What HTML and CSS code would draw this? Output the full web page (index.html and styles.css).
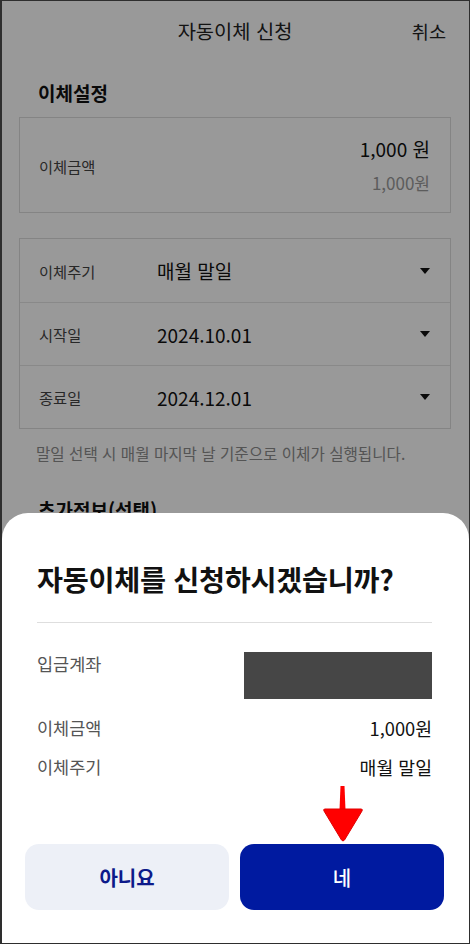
FILE: index.html
```html
<!DOCTYPE html>
<html lang="ko">
<head>
<meta charset="utf-8">
<title>자동이체 신청</title>
<link rel="stylesheet" href="styles.css">
</head>
<body>
<div class="screen">
  <div class="page">
    <header class="topbar">
      <h1 class="topbar-title">자동이체 신청</h1>
      <span class="topbar-cancel">취소</span>
    </header>

    <h2 class="section-title">이체설정</h2>
    <div class="card amount-card">
      <span class="field-label">이체금액</span>
      <div class="amount-values">
        <span class="amount-main">1,000 원</span>
        <span class="amount-sub">1,000원</span>
      </div>
    </div>

    <div class="card select-card">
      <div class="select-row">
        <span class="field-label">이체주기</span>
        <span class="select-value">매월 말일</span>
        <span class="caret"></span>
      </div>
      <div class="select-row">
        <span class="field-label">시작일</span>
        <span class="select-value">2024.10.01</span>
        <span class="caret"></span>
      </div>
      <div class="select-row">
        <span class="field-label">종료일</span>
        <span class="select-value">2024.12.01</span>
        <span class="caret"></span>
      </div>
    </div>
    <p class="note">말일 선택 시 매월 마지막 날 기준으로 이체가 실행됩니다.</p>

    <h2 class="section-title extra-title">추가정보(선택)</h2>
  </div>

  <div class="dim"></div>

  <div class="sheet">
    <h3 class="sheet-title">자동이체를 신청하시겠습니까?</h3>
    <div class="sheet-divider"></div>
    <div class="info-row account-row">
      <span class="info-label">입금계좌</span>
      <span class="masked"></span>
    </div>
    <div class="info-row">
      <span class="info-label">이체금액</span>
      <span class="info-value">1,000원</span>
    </div>
    <div class="info-row">
      <span class="info-label">이체주기</span>
      <span class="info-value">매월 말일</span>
    </div>
    <div class="sheet-actions">
      <button class="btn btn-no">아니요</button>
      <button class="btn btn-yes">네</button>
    </div>
  </div>

  <svg class="pointer" width="46" height="62" viewBox="0 0 46 62" aria-hidden="true">
    <path d="M20.5 2 L24.5 2 L25.5 26 L19.5 26 Z" fill="#ff0000"/>
    <path d="M5 25 L41 25 Q43 25 42 27 L24.5 56 Q23 58 21.5 56 L4 27 Q3 25 5 25 Z" fill="#ff0000" stroke="#e00000" stroke-width="1"/>
  </svg>
</div>
</body>
</html>
```

FILE: styles.css
```css
* { box-sizing: border-box; }

html, body {
  margin: 0;
  padding: 0;
  background: #fff;
}

body {
  font-family: "Noto Sans CJK KR", "Noto Sans", sans-serif;
  color: #222;
}

.screen {
  position: relative;
  width: 470px;
  height: 944px;
  overflow: hidden;
  background: #fff;
  border: 1px solid #2e2e2e;
  border-left-width: 2px;
}

.page {
  display: flex;
  flex-direction: column;
  padding: 0 18px 0 17px;
}

.topbar {
  height: 58px;
  display: flex;
  align-items: center;
  justify-content: center;
  position: relative;
}

.topbar-title {
  margin: 0;
  font-size: 19.8px;
  font-weight: 400;
  color: #222;
}

.topbar-cancel {
  position: absolute;
  right: 5px;
  top: 50%;
  transform: translateY(-50%);
  font-size: 18.6px;
  color: #222;
}

.section-title {
  margin: 21px 0 11px 19px;
  font-size: 19px;
  line-height: 26px;
  font-weight: 700;
  color: #111;
}

.card {
  border: 1px solid #dcdcdc;
  background: #fff;
}

.amount-card {
  height: 96px;
  display: flex;
  align-items: center;
  justify-content: space-between;
  padding: 0 20px 0 19px;
}

.field-label {
  font-size: 15.3px;
  color: #444;
}

.amount-card .field-label {
  margin-top: 2px;
}

.amount-values {
  display: flex;
  flex-direction: column;
  align-items: flex-end;
}

.amount-main {
  font-size: 19px;
  line-height: 24px;
  color: #111;
}

.amount-sub {
  margin-top: 12px;
  font-size: 17px;
  line-height: 20px;
  color: #9a9a9a;
}

.select-card {
  margin-top: 25px;
}

.select-row {
  height: 63px;
  display: flex;
  align-items: center;
  padding: 0 20px 0 19px;
  border-top: 1px solid #e4e4e4;
}

.select-row:first-child {
  border-top: none;
}

.select-row .field-label {
  width: 118px;
  flex: none;
}

.select-value {
  flex: 1;
  font-size: 19px;
  color: #111;
}

.caret {
  width: 0;
  height: 0;
  border-left: 5px solid transparent;
  border-right: 5px solid transparent;
  border-top: 6px solid #111;
}

.note {
  margin: 14px 0 0 17px;
  font-size: 15.6px;
  line-height: 20px;
  color: #8c8c8c;
  white-space: nowrap;
}

.extra-title {
  margin-top: 34px;
}

.dim {
  position: absolute;
  inset: 0;
  background: rgba(0, 0, 0, 0.4);
}

.sheet {
  position: absolute;
  left: 0;
  right: 0;
  bottom: 0;
  height: 430px;
  background: #fff;
  border-radius: 26px 26px 0 0;
  padding: 47px 37px 0 35px;
  display: flex;
  flex-direction: column;
}

.sheet-title {
  margin: 0;
  font-size: 28.3px;
  line-height: 38px;
  font-weight: 700;
  color: #111;
  letter-spacing: -0.3px;
  white-space: nowrap;
}

.sheet-divider {
  margin-top: 24px;
  height: 1px;
  background: #dedede;
}

.info-row {
  display: flex;
  justify-content: space-between;
  align-items: center;
  height: 39px;
}

.account-row {
  margin-top: 29px;
  height: 47px;
  align-items: flex-start;
  margin-bottom: 9px;
}

.account-row .info-label {
  line-height: 24px;
}

.info-label {
  font-size: 17.5px;
  color: #555;
}

.info-value {
  font-size: 18.3px;
  color: #111;
}

.masked {
  width: 188px;
  height: 47px;
  background: #464646;
}

.sheet-actions {
  margin: auto -12px 33px -12px;
  display: grid;
  grid-template-columns: 1fr 1fr;
  gap: 11px;
}

.btn {
  height: 66px;
  border: none;
  border-radius: 14px;
  font-family: "Noto Sans CJK KR", "Noto Sans", sans-serif;
  font-size: 20px;
  cursor: pointer;
}

.btn-no {
  background: #edf0f7;
  color: #0d1a8a;
  font-weight: 700;
}

.btn-yes {
  background: #001aa0;
  color: #fff;
  font-weight: 500;
}

.pointer {
  position: absolute;
  left: 318px;
  top: 783px;
}
```
